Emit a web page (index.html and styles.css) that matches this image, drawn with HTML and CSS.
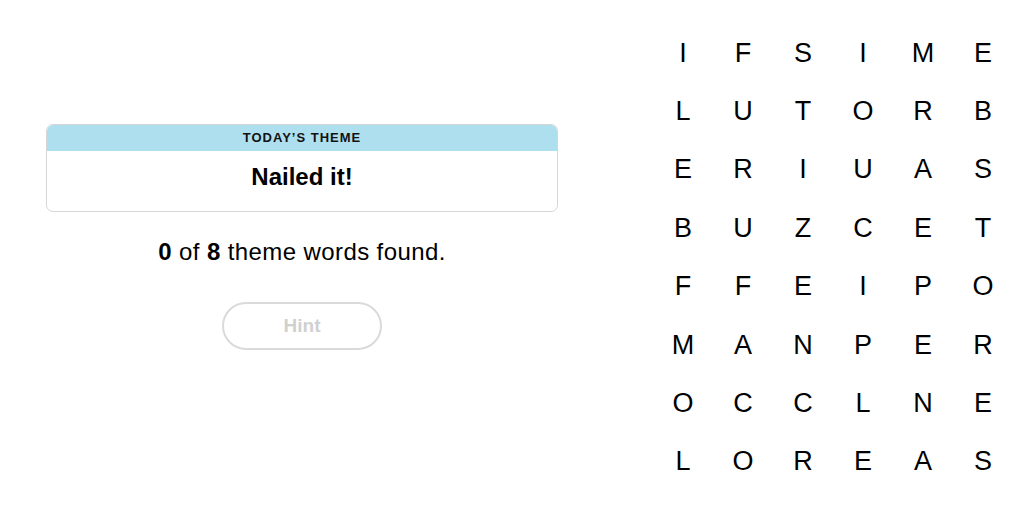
FILE: index.html
```html
<!DOCTYPE html>
<html>
<head>
<meta charset="utf-8">
<link rel="stylesheet" href="styles.css">
</head>
<body>
<div class="page">
  <section class="left">
    <div class="card">
      <div class="card-head">TODAY’S THEME</div>
      <div class="card-body">Nailed it!</div>
    </div>
    <p class="progress"><b>0</b> of <b>8</b> theme words found.</p>
    <button class="hint" type="button">Hint</button>
  </section>
  <section class="board">
    <span>I</span><span>F</span><span>S</span><span>I</span><span>M</span><span>E</span>
    <span>L</span><span>U</span><span>T</span><span>O</span><span>R</span><span>B</span>
    <span>E</span><span>R</span><span>I</span><span>U</span><span>A</span><span>S</span>
    <span>B</span><span>U</span><span>Z</span><span>C</span><span>E</span><span>T</span>
    <span>F</span><span>F</span><span>E</span><span>I</span><span>P</span><span>O</span>
    <span>M</span><span>A</span><span>N</span><span>P</span><span>E</span><span>R</span>
    <span>O</span><span>C</span><span>C</span><span>L</span><span>N</span><span>E</span>
    <span>L</span><span>O</span><span>R</span><span>E</span><span>A</span><span>S</span>
  </section>
</div>
</body>
</html>
```

FILE: styles.css
```css
html, body {
  margin: 0;
  padding: 0;
  background: #ffffff;
}

body {
  font-family: "Liberation Sans", Arial, sans-serif;
  color: #000000;
}

.page {
  display: flex;
  height: 511px;
}

.left {
  width: 512px;
  margin-left: 46px;
  padding-top: 124px;
  display: flex;
  flex-direction: column;
  align-items: center;
}

.card {
  width: 100%;
  box-sizing: border-box;
  border: 1px solid #d6d6d6;
  border-radius: 7px;
  overflow: hidden;
}

.card-head {
  background: #aedfee;
  height: 26px;
  line-height: 26px;
  text-align: center;
  font-size: 13px;
  font-weight: 700;
  letter-spacing: 1px;
  color: #121212;
}

.card-body {
  height: 60px;
  line-height: 51px;
  text-align: center;
  font-size: 24px;
  font-weight: 700;
}

.progress {
  margin: 26px 0 0;
  font-size: 24px;
  line-height: 28px;
  letter-spacing: 0.4px;
  text-align: center;
}

.hint {
  margin-top: 36px;
  width: 160px;
  height: 48px;
  border: 2px solid #dadada;
  border-radius: 24px;
  background: #ffffff;
  color: #d0d0d0;
  font-family: "Liberation Sans", Arial, sans-serif;
  font-size: 19px;
  font-weight: 700;
  padding: 0;
}

.board {
  margin-left: 95px;
  margin-top: 24px;
  display: grid;
  grid-template-columns: repeat(6, 60px);
  grid-template-rows: repeat(8, 58.4px);
  align-self: flex-start;
}

.board span {
  display: flex;
  align-items: center;
  justify-content: center;
  font-size: 27px;
  color: #000000;
}
```
